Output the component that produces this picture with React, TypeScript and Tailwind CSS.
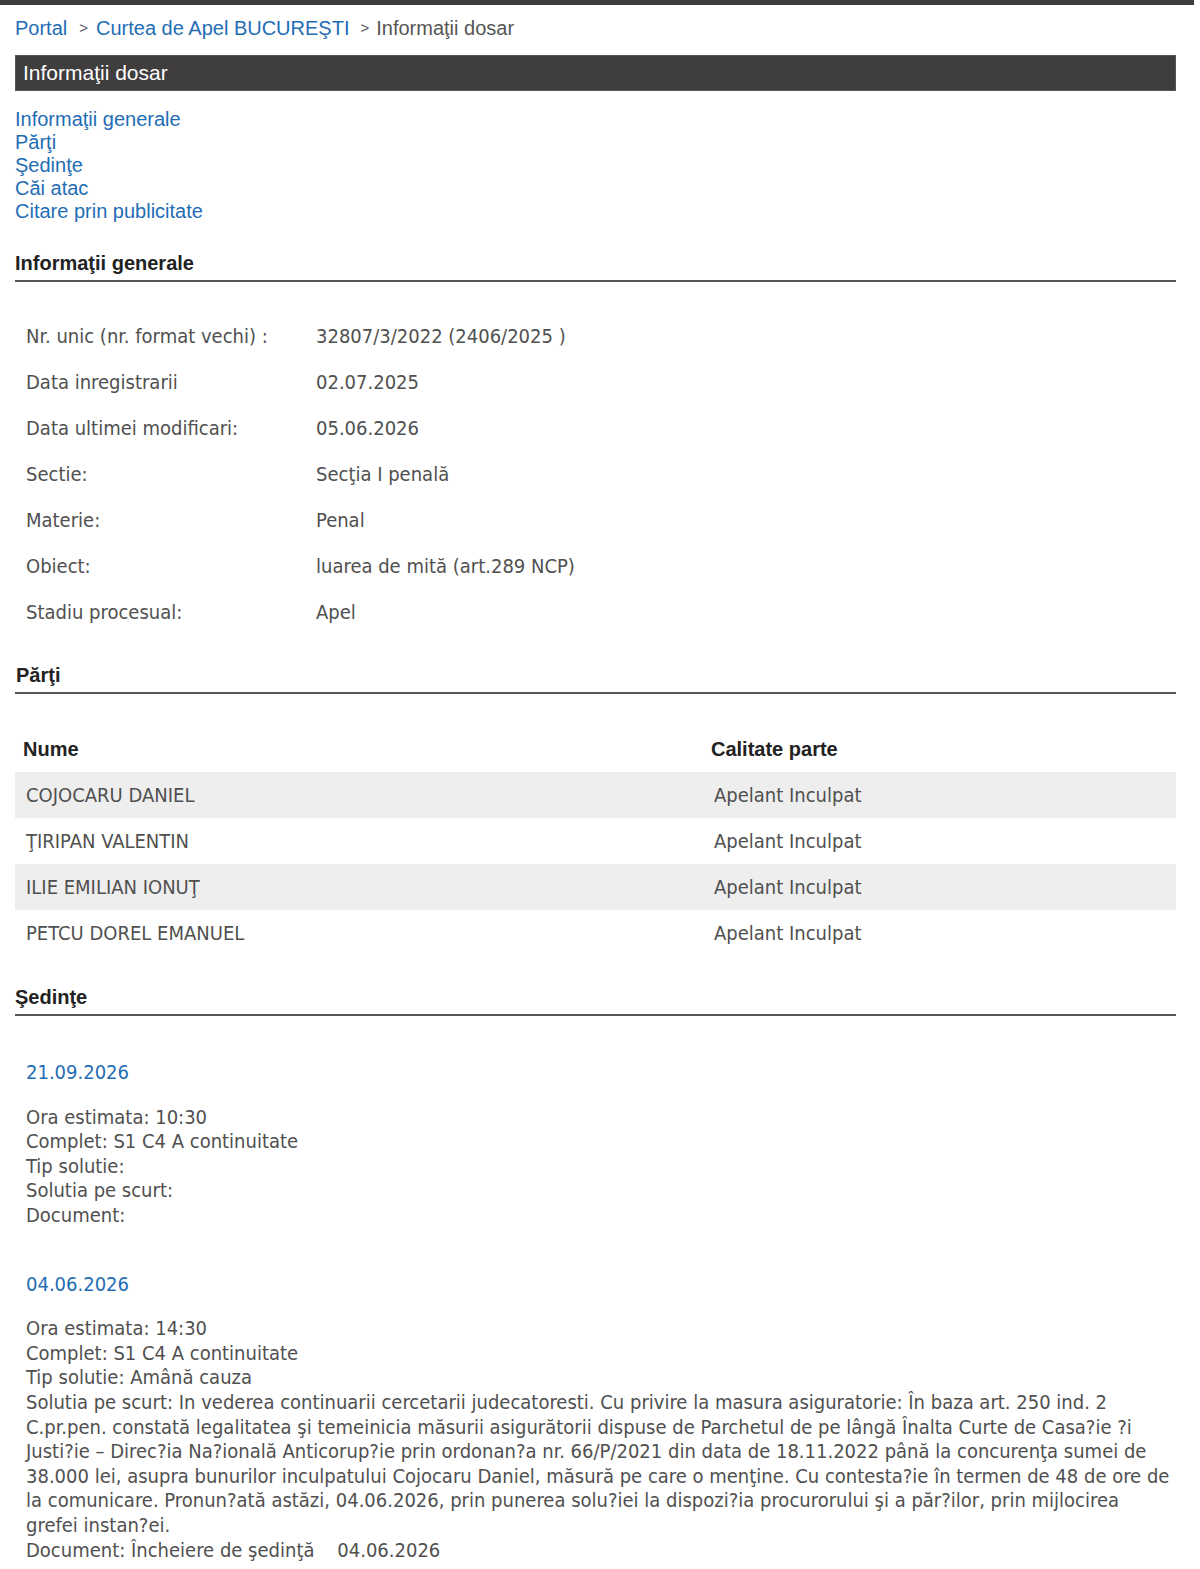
import React from "react";

const arial = "font-['Liberation_Sans',Arial,sans-serif]";
const tahoma = "font-['DejaVu_Sans_Condensed','DejaVu_Sans',Tahoma,sans-serif]";

const generalInfo: [string, string][] = [
  ["Nr. unic (nr. format vechi) :", "32807/3/2022 (2406/2025 )"],
  ["Data inregistrarii", "02.07.2025"],
  ["Data ultimei modificari:", "05.06.2026"],
  ["Sectie:", "Secţia I penală"],
  ["Materie:", "Penal"],
  ["Obiect:", "luarea de mită (art.289 NCP)"],
  ["Stadiu procesual:", "Apel"],
];

const parties: [string, string][] = [
  ["COJOCARU DANIEL", "Apelant Inculpat"],
  ["ŢIRIPAN VALENTIN", "Apelant Inculpat"],
  ["ILIE EMILIAN IONUŢ", "Apelant Inculpat"],
  ["PETCU DOREL EMANUEL", "Apelant Inculpat"],
];

type Sedinta = {
  data: string;
  ora: string;
  complet: string;
  tip: string;
  solutie: string;
  document: string;
};

const sedinte: Sedinta[] = [
  {
    data: "21.09.2026",
    ora: "10:30",
    complet: "S1 C4 A continuitate",
    tip: "",
    solutie: "",
    document: "",
  },
  {
    data: "04.06.2026",
    ora: "14:30",
    complet: "S1 C4 A continuitate",
    tip: "Amână cauza",
    solutie:
      "In vederea continuarii cercetarii judecatoresti. Cu privire la masura asiguratorie: În baza art. 250 ind. 2 C.pr.pen. constată legalitatea şi temeinicia măsurii asigurătorii dispuse de Parchetul de pe lângă Înalta Curte de Casa?ie ?i Justi?ie – Direc?ia Na?ională Anticorup?ie prin ordonan?a nr. 66/P/2021 din data de 18.11.2022 până la concurenţa sumei de 38.000 lei, asupra bunurilor inculpatului Cojocaru Daniel, măsură pe care o menţine. Cu contesta?ie în termen de 48 de ore de la comunicare. Pronun?ată astăzi, 04.06.2026, prin punerea solu?iei la dispozi?ia procurorului şi a păr?ilor, prin mijlocirea grefei instan?ei.",
    document: "Încheiere de şedinţă\u00a0\u00a0\u00a0\u00a004.06.2026",
  },
];

function SectionTitle({ children, className = "" }: { children: React.ReactNode; className?: string }) {
  return (
    <h3
      className={`${arial} text-[20px] leading-[24px] font-bold text-[#222] border-b-2 border-[#555] pb-[5px] ${className}`}
    >
      {children}
    </h3>
  );
}

export default function App() {
  return (
    <div className="min-h-[1569px] bg-white">
      {/* bara de sus */}
      <div className="h-[5px] w-[1194px] bg-[#3f3d3e]" />

      <div className="ml-[15px] w-[1161px]">
        {/* breadcrumb */}
        <div className={`${arial} mt-[11px] flex items-center text-[20px] leading-[24px]`}>
          <a className="text-[#1f6db5]">Portal</a>
          <span className="pl-[12px] pr-[8px] text-[15px] text-[#555]">&gt;</span>
          <a className="text-[#1f6db5]">Curtea de Apel BUCUREŞTI</a>
          <span className="pl-[11px] pr-[7px] text-[15px] text-[#555]">&gt;</span>
          <span className="text-[#555]">Informaţii dosar</span>
        </div>

        <div className="mt-[15px] h-[36px] border border-[#555] bg-[#3f3d3e] pl-[7px] flex items-center">
          <h2 className={`${arial} text-[21px] text-white`}>Informaţii dosar</h2>
        </div>

        {/* cuprins */}
        <nav className={`${arial} mt-[17px] flex flex-col text-[20px] leading-[23px] text-[#1f6db5]`}>
          <a>Informaţii generale</a>
          <a>Părţi</a>
          <a>Şedinţe</a>
          <a>Căi atac</a>
          <a>Citare prin publicitate</a>
        </nav>

        <SectionTitle className="mt-[28px]">Informaţii generale</SectionTitle>

        <table className={`${tahoma} mt-[31px] w-full text-[20px] text-[#505050]`}>
          <tbody>
            {generalInfo.map(([label, value]) => (
              <tr key={label} className="h-[46px]">
                <td className="w-[301px] pl-[11px] align-middle">{label}</td>
                <td className="align-middle">{value}</td>
              </tr>
            ))}
          </tbody>
        </table>

        <SectionTitle className="mt-[28px] pl-[1px]">Părţi</SectionTitle>

        <table className="mt-[32px] w-full text-[20px]">
          <thead>
            <tr className="h-[46px]">
              <th className={`${arial} w-[688px] pl-[8px] text-left text-[20px] font-bold text-[#222]`}>Nume</th>
              <th className={`${arial} pl-[8px] text-left text-[20px] font-bold text-[#222]`}>Calitate parte</th>
            </tr>
          </thead>
          <tbody className={`${tahoma} text-[#505050]`}>
            {parties.map(([nume, calitate], i) => (
              <tr key={nume} className={`h-[46px] ${i % 2 === 0 ? "bg-[#eeeeee]" : "bg-white"}`}>
                <td className="pl-[11px]">{nume}</td>
                <td className="pl-[11px]">{calitate}</td>
              </tr>
            ))}
          </tbody>
        </table>

        <SectionTitle className="mt-[29px]">Şedinţe</SectionTitle>

        <div className={`${tahoma} pl-[11px] pr-[6px] text-[20px] leading-[24.6px] text-[#505050]`}>
          {sedinte.map((s, i) => (
            <div key={s.data} className={i === 0 ? "mt-[44px]" : "mt-[44px]"}>
              <div className="text-[#1f6db5]">{s.data}</div>
              <div className="mt-[20px]">
                <div>Ora estimata: {s.ora}</div>
                <div>Complet: {s.complet}</div>
                <div>Tip solutie: {s.tip}</div>
                <div>Solutia pe scurt: {s.solutie}</div>
                <div>Document: {s.document}</div>
              </div>
            </div>
          ))}
        </div>
      </div>
    </div>
  );
}
